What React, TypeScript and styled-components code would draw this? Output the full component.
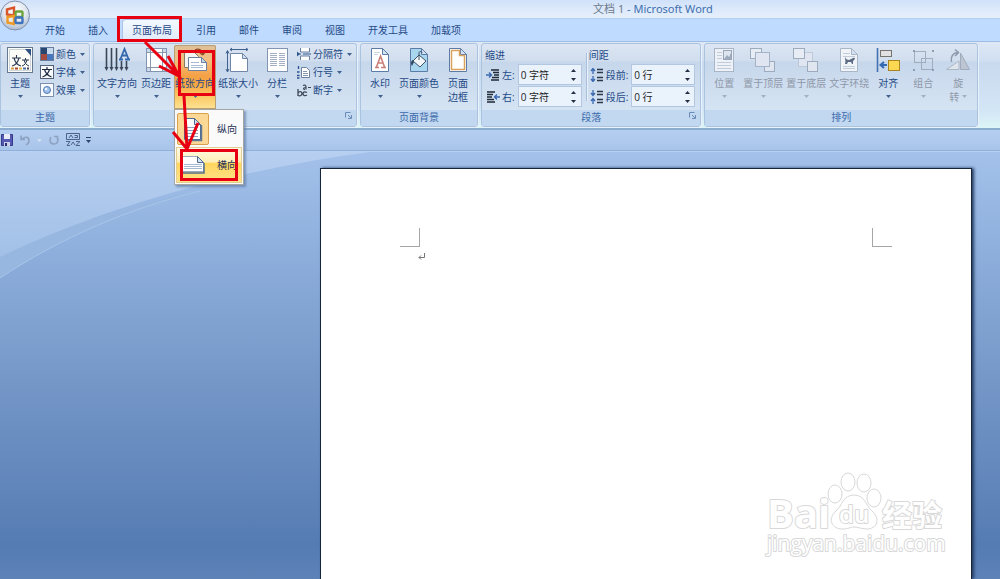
import React, { useState } from "react";
import styled, { createGlobalStyle, css } from "styled-components";

const GlobalStyle = createGlobalStyle`
  *, *::before, *::after { box-sizing: border-box; }
  body { margin: 0; }
  body, button, input {
    font-family: "Open Sans", "Noto Sans CJK SC", sans-serif;
    font-size: 10px;
    line-height: 14px;
    color: #1f4a86;
  }
  svg { display: block; flex: none; }
`;

const Window = styled.div`
  position: relative;
  display: flex;
  flex-direction: column;
  min-height: 100vh;
  overflow: hidden;
  background: #bfdbff;
`;

const TitleBar = styled.header`
  height: 19px;
  padding-left: 306px;
  display: flex;
  align-items: center;
  justify-content: center;
  border-bottom: 1px solid #b3cfee;
  background: linear-gradient(#d0e1fa 0%, #dbe8fb 40%, #e6effb 100%);
`;

const Title = styled.h1`
  margin: 0;
  font-family: "Noto Sans", "Noto Sans CJK SC", sans-serif;
  font-size: 11px;
  font-weight: 400;
  line-height: 16px;
  white-space: pre;
  color: #3d6fae;
`;

const DocName = styled.span`
  color: #6d7a8c;
`;

const OfficeButton = styled.button`
  position: absolute;
  left: 0;
  top: 0;
  padding: 0;
  border: 0;
  background: none;
`;

const Tabs = styled.nav`
  display: flex;
  height: 22px;
  padding-left: 35px;
  gap: 3px;
`;

const Tab = styled.button<{ $active?: boolean }>`
  padding: 0 10px;
  border: 0;
  background: none;
  ${(p) =>
    p.$active &&
    css`
      margin: 0 1px;
      border-radius: 3px 3px 0 0;
      box-shadow: inset 1px 1px #a9c4e8, inset -1px 0 #a9c4e8;
      background: linear-gradient(#f4f9ff, #dfeafa);
    `}
`;

const Ribbon = styled.div`
  display: flex;
  gap: 3px;
  padding: 1px 0;
  border-top: 1px solid #9dbce6;
  border-bottom: 2px solid #8cacd0;
  background: linear-gradient(#dfe8f5 0%, #d0dff1 22%, #c9d9ee 24%, #d3e6f6 80%, #dcf5f6 100%);
`;

const GroupBox = styled.section`
  display: flex;
  flex-direction: column;
  height: 84px;
  border: 1px solid #aac4e0;
  border-radius: 3px;
  box-shadow: 1px 1px #e9f2fb;
  background: linear-gradient(#dce6f3 0%, #d1deee 20%, #c7d7eb 22%, #dae8f6 100%);
`;

const GroupBody = styled.div`
  flex: 1;
  display: flex;
  gap: 1px;
  padding: 1px 2px 0;
`;

const GroupFoot = styled.footer`
  position: relative;
  height: 16px;
  line-height: 15px;
  text-align: center;
  color: #3e6aaa;
  background: #c1d8f0;
`;

const Launcher = styled.button`
  position: absolute;
  right: 3px;
  top: 2px;
  padding: 0;
  border: 0;
  background: none;
`;

const ButtonSlot = styled.div`
  position: relative;
`;

const BigButton = styled.button<{ $wide?: boolean; $open?: boolean }>`
  display: flex;
  flex-direction: column;
  align-items: center;
  width: ${(p) => (p.$wide ? 42 : 34)}px;
  height: 64px;
  padding: 2px 0 0;
  border: 0;
  border-radius: 2px 2px 0 0;
  white-space: nowrap;
  background: ${(p) =>
    p.$open ? "linear-gradient(#dcc09a 0%, #f3bd7c 25%, #f5a147 48%, #f7a540 60%, #fbcf70 85%, #fde394 100%)" : "none"};
  box-shadow: ${(p) => (p.$open ? "inset 0 0 0 1px #b9a074" : "none")};
  &:disabled { color: #8e98a8; }
`;

const BigLabel = styled.span`
  margin-top: 3px;
`;

const CaretLine = styled.span`
  display: flex;
  align-items: center;
  gap: 3px;
  height: 13px;
`;

const SmallColumn = styled.div`
  display: flex;
  flex-direction: column;
  padding: 0 1px;
`;

const SmallButton = styled.button`
  display: flex;
  align-items: center;
  gap: 2px;
  height: 18px;
  padding: 0 1px;
  border: 0;
  white-space: nowrap;
  background: none;
`;

const SmallCaret = styled.span`
  padding-left: 2px;
`;

const Menu = styled.ul`
  position: absolute;
  z-index: 2;
  left: 0;
  top: 64px;
  width: 70px;
  margin: 0;
  padding: 1px;
  list-style: none;
  border: 1px solid #a5a5a5;
  background: #fafafa;
  box-shadow: 2px 2px 2px #54709a99;
`;

const MenuItem = styled.button<{ $hot?: boolean }>`
  display: flex;
  align-items: center;
  gap: 8px;
  width: 100%;
  height: 36px;
  padding: 1px;
  border: 0;
  white-space: nowrap;
  color: #1d2f55;
  background: ${(p) => (p.$hot ? "linear-gradient(#fffbe8 0%, #ffeeb5 42%, #ffd75e 45%, #ffe38a 100%)" : "none")};
  box-shadow: ${(p) => (p.$hot ? "inset 0 0 0 1px #e2cd92" : "none")};
`;

const MenuIcon = styled.span<{ $checked?: boolean }>`
  display: grid;
  place-items: center;
  width: 32px;
  height: 32px;
  border: 1px solid ${(p) => (p.$checked ? "#d9a14e" : "transparent")};
  border-radius: 2px;
  background: ${(p) => (p.$checked ? "#fbd896" : "none")};
`;

const Fields = styled.div`
  display: flex;
  flex-direction: column;
  gap: 1px;
  padding: 3px 3px 0 1px;
`;

const FieldsTitle = styled.div`
  height: 15px;
`;

const FieldRow = styled.div`
  display: flex;
  align-items: center;
  height: 21px;
  gap: 3px;
  padding-left: 1px;
`;

const FieldLabel = styled.label`
  display: flex;
  align-items: center;
  gap: 2px;
  white-space: nowrap;
`;

const Spin = styled.span`
  display: flex;
  width: 64px;
  height: 21px;
  border: 1px solid #b3c7e1;
  background: #eaf2fb;
`;

const SpinInput = styled.input`
  flex: 1;
  min-width: 0;
  padding: 0 0 0 2px;
  border: 0;
  outline: 0;
  color: #1c1c1c;
  background: none;
`;

const SpinKeys = styled.span`
  display: flex;
  flex-direction: column;
  justify-content: center;
  gap: 1px;
  width: 14px;
`;

const SpinKey = styled.button`
  display: grid;
  place-items: center;
  height: 8px;
  padding: 0;
  border: 0;
  background: none;
`;

const Divider = styled.div`
  width: 1px;
  height: 48px;
  margin-top: 8px;
  background: #a9bfdb;
  box-shadow: 1px 0 #e8f0fa;
`;

const QuickBar = styled.div`
  display: flex;
  align-items: center;
  gap: 6px;
  height: 21px;
  padding-left: 1px;
  border-bottom: 1px solid #8fafd9;
  background: linear-gradient(#b4cff0, #a9c5ea);
`;

const QuickButton = styled.button`
  padding: 0;
  border: 0;
  background: none;
`;

const Workspace = styled.main`
  position: relative;
  flex: 1;
  display: flex;
  padding: 16px 28px 0 32%;
  border-top: 1px solid #b9d1f2;
  background: linear-gradient(#a3c1ea 0%, #8fb0dd 22%, #7496c7 55%, #557cb3 92%, #5c82b8 100%);
`;

const Swoosh = styled.svg`
  position: absolute;
  left: 0;
  top: 0;
`;

const Paper = styled.article`
  position: relative;
  flex: 1;
  padding: 59px 79px 0;
  border: solid #16243c;
  border-width: 1px 1px 0;
  background: #fff;
  box-shadow: 2px 0 3px #223a5f;
`;

const Margins = styled.div`
  display: flex;
  justify-content: space-between;
`;

const Corner = styled.span<{ $side: "left" | "right" }>`
  width: 20px;
  height: 19px;
  border-bottom: 1px solid #a6a6a6;
  border-${(p) => (p.$side === "left" ? "right" : "left")}: 1px solid #a6a6a6;
`;

const Paragraph = styled.p`
  margin: 0;
  padding: 6px 0 0 18px;
`;

const Watermark = styled.svg`
  position: absolute;
  right: 22px;
  bottom: 21px;
  text { paint-order: stroke; }
`;

const Annotations = styled.svg`
  position: absolute;
  z-index: 3;
  left: 0;
  top: 0;
  pointer-events: none;
`;

/* ---------- drawings ---------- */

const Caret = ({ color = "#41608f" }: { color?: string }) => (
  <svg width="5" height="3" viewBox="0 0 5 3">
    <path d="M0 0h5L2.5 3z" fill={color} />
  </svg>
);

const UpDown = ({ down }: { down?: boolean }) => (
  <svg width="5" height="3" viewBox="0 0 5 3">
    <path d={down ? "M0 0h5L2.500 3z" : "M0 3h5L2.500 0z"} fill="#222f45" />
  </svg>
);

const Big = ({ children }: { children: React.ReactNode }) => (
  <svg width="26" height="26" viewBox="0 0 26 26" fill="none">
    {children}
  </svg>
);

const Small = ({ children }: { children: React.ReactNode }) => (
  <svg width="14" height="14" viewBox="0 0 14 14" fill="none">
    {children}
  </svg>
);

const Sheet = ({ edge = "#5c7ba6", fill = "#fff" }) => (
  <>
    <path d="M4.500 1.500h11l6 6v17h-17z" fill={fill} stroke={edge} />
    <path d="M15.500 1.500v6h6z" fill="#d5e2f3" stroke={edge} />
  </>
);

const ThemeIcon = () => (
  <Big>
    <rect x=".5" y=".5" width="25" height="25" fill="#fdfdf8" stroke="#66788f" />
    <rect x="2.500" y="2.500" width="21" height="21" stroke="#cdd5df" />
    <path d="M18 2h6v7z" fill="#2e4f82" />
    <path d="M5 11h9M9.500 8v3M7 11c1 4 3 7 7 8M12 11c-1 4-3 7-7 8" stroke="#27374f" strokeWidth="1.100" />
    <path d="M15 13h7M18.500 11v2M17 13c1 3 2 5 5 6M20 13c-1 3-2 5-5 6" stroke="#27374f" />
    <path d="M4 21.500h3" stroke="#d99a3c" strokeWidth="2" />
    <path d="M8 21.500h3" stroke="#a8482c" strokeWidth="2" />
    <path d="M12 21.500h3" stroke="#e3b64d" strokeWidth="2" />
    <path d="M16 21.500h3" stroke="#4a6ea6" strokeWidth="2" />
    <path d="M20 21.500h2" stroke="#3d4757" strokeWidth="2" />
  </Big>
);

const ColorsIcon = () => (
  <Small>
    <rect x=".5" y=".5" width="13" height="13" fill="#fff" stroke="#667d9f" />
    <rect x="1" y="1" width="6" height="6" fill="#28466f" />
    <rect x="7" y="1" width="6" height="6" fill="#c9d9ee" />
    <rect x="1" y="7" width="6" height="6" fill="#a34a3e" />
    <rect x="7" y="7" width="6" height="6" fill="#4778bd" />
  </Small>
);

const FontsIcon = () => (
  <Small>
    <rect x=".5" y=".5" width="13" height="13" fill="#f7f9fb" stroke="#52627a" />
    <path d="M2 4.500h10M7 2v2.500M4.500 4.500c1 3.500 3 6 7 7.500M9.500 4.500c-1 3.500-3 6-7 7.500" stroke="#1d2940" strokeWidth="1.200" />
  </Small>
);

const EffectsIcon = () => (
  <Small>
    <rect x=".5" y=".5" width="13" height="13" fill="#f7fafe" stroke="#7d90ad" />
    <circle cx="7" cy="7" r="3.500" fill="#9fc1ec" stroke="#5379b0" />
    <circle cx="6" cy="6" r="1.300" fill="#eaf3ff" />
  </Small>
);

const TextDirectionIcon = () => (
  <Big>
    <path d="M2.500 1v19M7.500 1v19M12.500 1v19M17.500 14v6M22.500 14v6" stroke="#3b4658" strokeWidth="1.600" />
    <path d="M.5 20h4l-2 4zM5.500 20h4l-2 4zM10.500 20h4l-2 4zM15.500 20h4l-2 4zM20.500 20h4l-2 4z" fill="#3b4658" />
    <path d="M15 12.500h4M21 12.500h5M16.500 12 20.500 2l4 10M18 8.500h5" stroke="#3468ad" strokeWidth="1.800" />
  </Big>
);

const MarginsIcon = () => (
  <Big>
    <rect x="3.500" y="1.500" width="20" height="23" fill="#fff" stroke="#8195b2" />
    <path d="M7.500 2v22M19.500 2v22M4 5.500h19M4 20.500h19" stroke="#8a98ad" />
    <path d="M4 2h3v3H4zM20 2h3v3h-3zM4 21h3v3H4zM20 21h3v3h-3z" fill="#cdd9ea" />
  </Big>
);

const OrientationIcon = () => (
  <Big>
    <path d="M2.500 5.500h10l4 4v11h-14z" fill="#f3f3f1" stroke="#8c7a62" />
    <path d="M6.500 10.500h13l5 5v8h-18z" fill="#fff" stroke="#6c7f9e" />
    <path d="M19.500 10.500v5h5z" fill="#c6d7ee" stroke="#6c7f9e" />
    <path d="M9 15.500h8M9 18.500h12M9 20.500h12" stroke="#a9bbd4" />
    <path d="M13 3c4-2 7 0 8 4M21 8l-3-2M21 8l2-3" stroke="#8f4a24" strokeWidth="1.300" />
  </Big>
);

const SizeIcon = () => (
  <Big>
    <path d="M5.500 6.500h12l5 5v13h-17z" fill="#fff" stroke="#7187a8" />
    <path d="M17.500 6.500v5h5z" fill="#d2dff0" stroke="#7187a8" />
    <path d="M2.500 4v21M1 6.500l1.500-3L4 6.500M1 22l1.500 3L4 22M5 2.500h18M7 1 5 2.500 7 4M21 1l2 1.500L21 4" stroke="#41618f" />
  </Big>
);

const ColumnsIcon = () => (
  <Big>
    <rect x="3.500" y="1.500" width="20" height="23" fill="#fff" stroke="#8195b2" />
    <path
      d="M6 6.500h7M6 8.500h7M6 10.500h7M6 12.500h7M6 14.500h7M6 16.500h7M6 18.500h7M15 6.500h6M15 8.500h6M15 10.500h6M15 12.500h6M15 14.500h6M15 16.500h6M15 18.500h6"
      stroke="#a3afc2"
    />
  </Big>
);

const BreaksIcon = () => (
  <Small>
    <path d="M3.500 1v4h9V1M3.500 13V9h9v4" fill="#fff" stroke="#6b7f9f" />
    <path d="M0 7h4M6 7h8" stroke="#31568f" strokeWidth="1.200" />
    <path d="M0 4.500 3 7 0 9.500z" fill="#31568f" />
  </Small>
);

const LineNumbersIcon = () => (
  <Small>
    <path d="M4.500 2.500h5l3 3v7h-8z" fill="#fff" stroke="#6b7f9f" />
    <path d="M6 6.500h4M6 8.500h5M6 10.500h5" stroke="#8495b0" />
    <path d="M1.500 1v3M0 7h2.500M0 10.500h2.500M0 13h2.500" stroke="#2d5290" strokeWidth="1.300" />
  </Small>
);

const HyphenIcon = () => (
  <Small>
    <path d="M1 6v7M1 10c1-2 4-2 4 .5S2 13.500 1 12M10 9.500c-3-1.500-4 0-4 1.200 0 2 2 2.500 4 1.300" stroke="#3c4656" strokeWidth="1.300" />
    <path d="M6 2.500c2-1 3 0 3 1.500v2.500M9 4.500c-3 0-3 2-1 2M11 4.500h3" stroke="#3c4656" strokeWidth="1.200" />
  </Small>
);

const WatermarkIcon = () => (
  <Big>
    <Sheet />
    <path d="M8 20.500h4M14 20.500h5M9.500 20 13.500 9l4 11M11 16h5" stroke="#cb8079" strokeWidth="1.600" />
    <path d="M7 5.500h6M7 7.500h4" stroke="#ccd5e2" />
  </Big>
);

const PageColorIcon = () => (
  <Big>
    <Sheet fill="#a8d6ef" />
    <path d="m7 14 6-6 7 6-6 6z" fill="#f3f6f9" stroke="#3f5068" />
    <path d="M13 13V6c0-2 3-2 3 0" stroke="#3f5068" />
    <path d="M7 13c-3 1-2 5-1 6l2-4z" fill="#31475f" />
  </Big>
);

const PageBorderIcon = () => (
  <Big>
    <Sheet />
    <path d="M6.500 3.500h8v5h5v14h-13z" stroke="#dba25e" strokeWidth="1.500" />
  </Big>
);

const IndentIcon = ({ right }: { right?: boolean }) => (
  <Small>
    <path
      d={right ? "M1 2h8M1 4.500h6M1 7h5M1 9.500h7M1 12h8" : "M5 2h8M7 4.500h6M8 7h5M6 9.500h7M5 12h8"}
      stroke="#1f2937"
      strokeWidth="1.500"
    />
    <path d={right ? "M14 7H9m2-2.500L8.500 7 11 9.500" : "M0 7h5M3 4.500 5.500 7 3 9.500"} stroke="#3a68b0" strokeWidth="1.400" />
  </Small>
);

const SpacingIcon = ({ after }: { after?: boolean }) => (
  <Small>
    <path d="M7 1.500h6M7 4.500h6M7 9.500h6M7 12.500h6" stroke="#2c3747" strokeWidth="1.600" />
    <path
      d={after ? "M3 0v5M1 3l2 2.500L5 3M3 14V9M1 11l2-2.500L5 11" : "M3 6V1M1 3l2-2.500L5 3M3 8v5M1 11l2 2.500L5 11"}
      stroke="#3a68b0"
      strokeWidth="1.300"
    />
  </Small>
);

const PositionIcon = () => (
  <Big>
    <rect x="3.500" y="1.500" width="19" height="23" fill="#eef2f8" stroke="#a9b6c8" />
    <path d="M6 5.500h5M6 8.500h5M6 11.500h5M6 15.500h14M6 18.500h14M6 21.500h14" stroke="#c2ccd9" />
    <rect x="12.500" y="3.500" width="8" height="9" fill="#dfe5ee" stroke="#97a5b9" />
    <path d="m13 12 3-4 2 2 2-4v6z" fill="#9eabbd" />
  </Big>
);

const FrontIcon = () => (
  <Big>
    <rect x=".5" y="1.500" width="11" height="10" fill="#e8edf5" stroke="#9dabbf" />
    <rect x="14.500" y="14.500" width="10" height="10" fill="#e0e6ef" stroke="#9dabbf" />
    <rect x="5.500" y="5.500" width="14" height="14" fill="#dfe6f2" stroke="#a5b3c7" />
  </Big>
);

const BackIcon = () => (
  <Big>
    <rect x="5.500" y="5.500" width="14" height="14" fill="#dfe6f2" stroke="#bdc9d9" />
    <rect x=".5" y="1.500" width="11" height="10" fill="#e8edf5" stroke="#9dabbf" />
    <rect x="14.500" y="14.500" width="10" height="10" fill="#e0e6ef" stroke="#9dabbf" />
  </Big>
);

const WrapIcon = () => (
  <Big>
    <Sheet edge="#a9b6c8" fill="#f0f4f9" />
    <path d="M7 6.500h7M7 9.500h12M7 19.500h12M7 21.500h12" stroke="#c2ccd9" />
    <path d="M9 10c1 2 2 3 4 3l4-2c3-1 2 2 0 3v3h-1l-1-2h-3l-1 2H9c1-3 0-4 0-7z" fill="#5d6c84" />
  </Big>
);

const AlignIcon = () => (
  <Big>
    <path d="M2.500 1v24" stroke="#4371b4" strokeWidth="1.600" />
    <rect x="5.500" y="3.500" width="11" height="6" fill="#e1e1e3" stroke="#77736f" />
    <rect x="13.500" y="13.500" width="11" height="10" fill="#fbd752" stroke="#a98422" />
    <path d="M12 18H6m3-3-3.500 3L9 21" stroke="#3469b2" strokeWidth="2" />
  </Big>
);

const CombineIcon = () => (
  <Big>
    <rect x="4.500" y="4.500" width="11" height="11" stroke="#a0adbf" />
    <rect x="11.500" y="11.500" width="11" height="11" stroke="#a0adbf" />
    <path d="M3 3h2v2H3zM22 3h2v2h-2zM3 22h2v2H3zM22 22h2v2h-2z" fill="#8e9cb2" />
  </Big>
);

const RotateIcon = () => (
  <Big>
    <path d="M1.500 22.500 14 14v8.500z" fill="#dfe5ed" stroke="#acb7c6" />
    <path d="M15.500 22.500V6l9 16.500z" fill="#bcc5d1" stroke="#a0acbd" />
    <path d="M6.500 15c-1-5 1-9 6-9.500M10 2.500l3.500 3L10 9" stroke="#8c99ac" strokeWidth="1.500" />
  </Big>
);

const PortraitIcon = () => (
  <svg width="20" height="26" viewBox="0 0 20 26" fill="none">
    <path d="M1.500 2.500h10l6 6v15h-16z" fill="#fff" stroke="#4c6a92" />
    <path d="M18.500 9v15.500H2" stroke="#5f7794" strokeWidth="1.500" />
    <path d="M11.500 2.500v6h6z" fill="#d5e2f3" stroke="#4c6a92" />
    <path d="M4 11.500h11M4 14.500h11M4 17.500h11M4 20.500h11" stroke="#8aa3c4" />
  </svg>
);

const LandscapeIcon = () => (
  <svg width="24" height="20" viewBox="0 0 24 20" fill="none">
    <path d="M1.500 1.500h15l6 6v9h-21z" fill="#fff" stroke="#9aa9bd" />
    <path d="M23 8v10H2" stroke="#56708f" strokeWidth="1.500" />
    <path d="M16.500 1.500v6h6z" fill="#d5e2f3" stroke="#4c6a92" />
    <path d="M3 9.500h18M3 11.500h18M3 13.500h18" stroke="#a5b9cf" />
  </svg>
);

const LauncherIcon = () => (
  <svg width="8" height="8" viewBox="0 0 8 8" fill="none" stroke="#6b8bb8">
    <path d="M.5 5.500v-5h5M3 3l3 3M6.500 3v3.500H3" />
  </svg>
);

const OfficeLogo = () => (
  <svg width="31" height="32" viewBox="0 0 31 32">
    <defs>
      <radialGradient id="orb" cx=".5" cy=".35" r=".65">
        <stop offset="0" stopColor="#ffffff" />
        <stop offset=".6" stopColor="#e3e8ef" />
        <stop offset="1" stopColor="#a9b8ce" />
      </radialGradient>
    </defs>
    <circle cx="15" cy="15.500" r="14.500" fill="url(#orb)" stroke="#7f92af" />
    <g fill="none" strokeWidth="2.400">
      <path d="M7 9.500 14 7.500v8L7 14.500z" stroke="#d9542b" />
      <rect x="15.500" y="11.500" width="7" height="5.500" rx="1" stroke="#6ba539" />
      <path d="M7.500 17 14 16v8l-6.500-1.500z" stroke="#ef9a25" />
      <rect x="15.500" y="17.500" width="7" height="5.500" rx="1" stroke="#3e73bd" />
    </g>
  </svg>
);

const SaveIcon = () => (
  <svg width="12" height="12" viewBox="0 0 12 12">
    <path d="M.5.5h11v11H.5z" fill="#5659b4" stroke="#363a86" />
    <path d="M3 0h6v5H3z" fill="#e8ecf8" />
    <path d="M3 8h6v4H3z" fill="#c9cfe8" />
    <path d="M4 9h2v3H4z" fill="#2c2f70" />
  </svg>
);

const UndoIcon = ({ flip }: { flip?: boolean }) => (
  <svg width="12" height="12" viewBox="0 0 12 12" fill="none" stroke="#8ea3c2" strokeWidth="1.600">
    <path d={flip ? "M9 2c2 4 1 8-3 8S1 6 3 3M6 2.500h3.500V6" : "M3 5c4-3 7-2 7 2 0 2-1 3-3 4M2 1.500V5.500H6"} />
  </svg>
);

const CustomIcon = () => (
  <svg width="14" height="14" viewBox="0 0 14 14" fill="none" stroke="#4d6387">
    <path d="M.5.500h13v6H.5zM3 5l2-3 2 3M8.500 2.500h3v2h-3M0 8.500h4l-3 4h3M5 12l2-3 2 3M10 8.500h4l-4 4h4" />
  </svg>
);

const MoreIcon = () => (
  <svg width="5" height="6" viewBox="0 0 5 6" fill="#2c456f">
    <path d="M0 0h5v1H0zM0 3h5L2.500 6z" />
  </svg>
);

const ReturnMark = () => (
  <svg width="8" height="8" viewBox="0 0 8 8" fill="none" stroke="#777">
    <path d="M6.500 0v4.500H1M3 2.500l-2 2 2 2" />
  </svg>
);

/* ---------- parts ---------- */

type ToolProps = {
  icon: React.ReactNode;
  label: string;
  second?: string;
  wide?: boolean;
  open?: boolean;
  disabled?: boolean;
  caret?: boolean;
  onClick?: () => void;
};

function BigTool({ icon, label, second, wide, open, disabled, caret = true, onClick }: ToolProps) {
  return (
    <BigButton type="button" $wide={wide} $open={open} disabled={disabled} onClick={onClick}>
      {icon}
      <BigLabel>{label}</BigLabel>
      <CaretLine>
        {second && <span>{second}</span>}
        {caret && <Caret color={disabled ? "#a3b0c3" : undefined} />}
      </CaretLine>
    </BigButton>
  );
}

function SmallTool({ icon, label }: { icon: React.ReactNode; label: string }) {
  return (
    <SmallButton type="button">
      {icon}
      <span>{label}</span>
      <SmallCaret>
        <Caret />
      </SmallCaret>
    </SmallButton>
  );
}

function Group({ title, launcher, children }: { title?: string; launcher?: boolean; children: React.ReactNode }) {
  return (
    <GroupBox>
      <GroupBody>{children}</GroupBody>
      <GroupFoot>
        {title}
        {launcher && (
          <Launcher type="button">
            <LauncherIcon />
          </Launcher>
        )}
      </GroupFoot>
    </GroupBox>
  );
}

function SpinField({ id, icon, label, unit }: { id: string; icon: React.ReactNode; label: string; unit: string }) {
  const [n, setN] = useState(0);
  return (
    <FieldRow>
      <FieldLabel htmlFor={id}>
        {icon}
        {label}
      </FieldLabel>
      <Spin>
        <SpinInput id={id} type="text" value={`${n} ${unit}`} onChange={(e) => setN(parseInt(e.target.value, 10) || 0)} />
        <SpinKeys>
          <SpinKey type="button" onClick={() => setN(n + 1)}>
            <UpDown />
          </SpinKey>
          <SpinKey type="button" onClick={() => setN(n - 1)}>
            <UpDown down />
          </SpinKey>
        </SpinKeys>
      </Spin>
    </FieldRow>
  );
}

const TABS = ["开始", "插入", "页面布局", "引用", "邮件", "审阅", "视图", "开发工具", "加载项"];

export default function App() {
  const [tab, setTab] = useState("页面布局");
  const [menuOpen, setMenuOpen] = useState(true);

  return (
    <Window>
      <GlobalStyle />
      <TitleBar>
        <Title>
          <DocName>文档 1</DocName> - Microsoft Word
        </Title>
      </TitleBar>
      <OfficeButton type="button">
        <OfficeLogo />
      </OfficeButton>
      <Tabs>
        {TABS.map((t) => (
          <Tab key={t} type="button" $active={t === tab} onClick={() => setTab(t)}>
            {t}
          </Tab>
        ))}
      </Tabs>

      <Ribbon>
        <Group title="主题">
          <BigTool icon={<ThemeIcon />} label="主题" />
          <SmallColumn>
            <SmallTool icon={<ColorsIcon />} label="颜色" />
            <SmallTool icon={<FontsIcon />} label="字体" />
            <SmallTool icon={<EffectsIcon />} label="效果" />
          </SmallColumn>
        </Group>

        <Group launcher>
          <BigTool icon={<TextDirectionIcon />} label="文字方向" wide />
          <BigTool icon={<MarginsIcon />} label="页边距" />
          <ButtonSlot>
            <BigTool icon={<OrientationIcon />} label="纸张方向" wide open={menuOpen} onClick={() => setMenuOpen(!menuOpen)} />
            {menuOpen && (
              <Menu>
                <li>
                  <MenuItem type="button">
                    <MenuIcon $checked>
                      <PortraitIcon />
                    </MenuIcon>
                    纵向
                  </MenuItem>
                </li>
                <li>
                  <MenuItem type="button" $hot>
                    <MenuIcon>
                      <LandscapeIcon />
                    </MenuIcon>
                    横向
                  </MenuItem>
                </li>
              </Menu>
            )}
          </ButtonSlot>
          <BigTool icon={<SizeIcon />} label="纸张大小" wide />
          <BigTool icon={<ColumnsIcon />} label="分栏" />
          <SmallColumn>
            <SmallTool icon={<BreaksIcon />} label="分隔符" />
            <SmallTool icon={<LineNumbersIcon />} label="行号" />
            <SmallTool icon={<HyphenIcon />} label="断字" />
          </SmallColumn>
        </Group>

        <Group title="页面背景">
          <BigTool icon={<WatermarkIcon />} label="水印" />
          <BigTool icon={<PageColorIcon />} label="页面颜色" wide />
          <BigTool icon={<PageBorderIcon />} label="页面" second="边框" caret={false} />
        </Group>

        <Group title="段落" launcher>
          <Fields>
            <FieldsTitle>缩进</FieldsTitle>
            <SpinField id="indent-left" icon={<IndentIcon />} label="左:" unit="字符" />
            <SpinField id="indent-right" icon={<IndentIcon right />} label="右:" unit="字符" />
          </Fields>
          <Divider />
          <Fields>
            <FieldsTitle>间距</FieldsTitle>
            <SpinField id="space-before" icon={<SpacingIcon />} label="段前:" unit="行" />
            <SpinField id="space-after" icon={<SpacingIcon after />} label="段后:" unit="行" />
          </Fields>
        </Group>

        <Group title="排列">
          <BigTool icon={<PositionIcon />} label="位置" disabled />
          <BigTool icon={<FrontIcon />} label="置于顶层" wide disabled />
          <BigTool icon={<BackIcon />} label="置于底层" wide disabled />
          <BigTool icon={<WrapIcon />} label="文字环绕" wide disabled />
          <BigTool icon={<AlignIcon />} label="对齐" />
          <BigTool icon={<CombineIcon />} label="组合" disabled />
          <BigTool icon={<RotateIcon />} label="旋" second="转" disabled />
        </Group>
      </Ribbon>

      <QuickBar>
        <QuickButton type="button"><SaveIcon /></QuickButton>
        <QuickButton type="button"><UndoIcon /></QuickButton>
        <QuickButton type="button"><Caret color="#d3e0f2" /></QuickButton>
        <QuickButton type="button"><UndoIcon flip /></QuickButton>
        <QuickButton type="button"><CustomIcon /></QuickButton>
        <QuickButton type="button"><MoreIcon /></QuickButton>
      </QuickBar>

      <Workspace>
        <Swoosh width="370" height="130" viewBox="0 0 370 130">
          <defs>
            <linearGradient id="haze" x1="0" y1="0" x2="0" y2="1">
              <stop offset="0" stopColor="#b7cff0" />
              <stop offset="1" stopColor="#a2c0e7" />
            </linearGradient>
          </defs>
          <path d="M0 126C60 86 130 56 200 39L190 41C120 56 60 75 0 104z" fill="#98b7e0" />
          <path d="M0 126C60 86 130 56 200 39" fill="none" stroke="#a9c5ea" />
          <path d="M0 0H370C250 16 120 48 0 105z" fill="url(#haze)" />
        </Swoosh>
        <Paper>
          <Margins>
            <Corner $side="left" />
            <Corner $side="right" />
          </Margins>
          <Paragraph>
            <ReturnMark />
          </Paragraph>
          <Watermark width="186" height="92" viewBox="0 0 186 92" fill="#fff" stroke="#d8d8d8">
            <g fontFamily='"Open Sans", "Noto Sans CJK SC", sans-serif' strokeWidth="2" strokeLinejoin="round">
              <text x="4" y="62" fontSize="40" fontWeight="700">Bai</text>
              <g strokeWidth="1">
                <ellipse cx="72" cy="28" rx="7" ry="9" />
                <ellipse cx="85" cy="16" rx="7" ry="9" />
                <ellipse cx="101" cy="17" rx="7" ry="9" />
                <ellipse cx="111" cy="32" rx="7" ry="9" />
                <path d="M91 29C80 29 79 40 73 45C64 53 69 63 79 63C86 63 87 61 91 61C95 61 98 63 104 63C114 63 118 53 109 45C103 40 102 29 91 29z" />
              </g>
              <text x="76" y="57" fontSize="24" fontWeight="600">du</text>
              <text x="119" y="60" fontSize="30" fontWeight="700">经验</text>
              <text x="4" y="85" fontSize="21">jingyan.baidu.com</text>
            </g>
          </Watermark>
        </Paper>
      </Workspace>

      <Annotations width="250" height="190" viewBox="0 0 250 190" fill="none" stroke="#e60012" strokeWidth="3">
        <rect x="118.500" y="17.500" width="62" height="23" />
        <rect x="179.500" y="51.500" width="34" height="43" />
        <rect x="181.500" y="150.500" width="55" height="29" />
        <path d="M145 42 178 75M168 56 179 76 159 66" />
        <path d="M184 96 187 148M173 132 187 149 198 123" />
      </Annotations>
    </Window>
  );
}
